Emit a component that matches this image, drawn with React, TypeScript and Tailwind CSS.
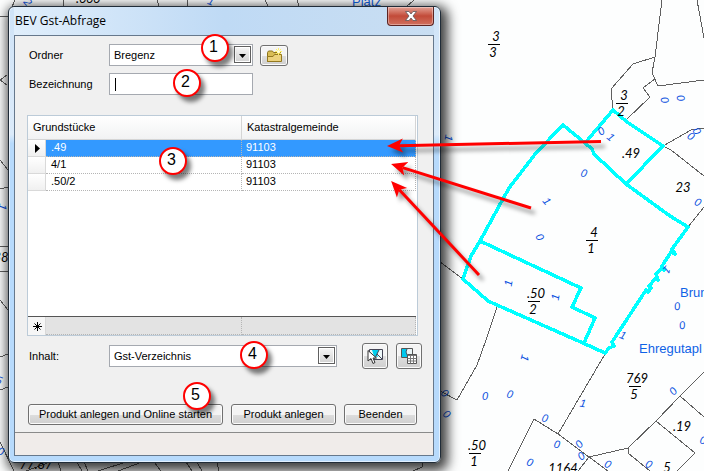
import React from 'react';

type Mark = [string, number, number, number];

const parcels = [
  { id: '.49', kg: '91103' },
  { id: '4/1', kg: '91103' },
  { id: '.50/2', kg: '91103' },
];

const boundaries = [
  'M662 0 655 57 652 73 658 86 704 80',
  'M655 57 633 64 611 89 613 110',
  'M655 79 643 88 650 97 626 120',
  'M697 0 704 38',
  'M663 146 691 130 704 128',
  'M663 146 671 150 704 176',
  'M688 227 704 207',
  'M440 262 463 279',
  'M497 307 486 340 477 365 457 400 440 391',
  'M605 354 558 434',
  'M508 471 534 419 558 434 589 457 608 471',
  'M578 471 589 457 628 448 656 421 680 396 704 372',
  'M628 448 628 453 650 471',
  'M656 421 695 453 677 471',
  'M680 396 704 417',
  'M15 0 8 16 0 16',
  'M63 0V6M157 0 159 6M187 0 188 6M265 0 268 6M297 0 299 6M414 0 406 7',
  'M7 75 0 80 7 85M0 160 8 170M0 189 8 187M0 247 8 246M0 271H8M0 300 8 310M0 357 8 354M0 390 8 387',
  'M0 442 14 471M26 471 50 462M58 462 61 471M77 462 82 471M84 462 88 471M98 471 126 462M118 471 142 462M154 462 161 471M186 462 192 471M197 462 202 471M217 462 219 471M422 463V467L413 471',
];

const marks: Mark[] = [
  ['1', 449, 138, 100], ['0', 601, 131, -35], ['1', 611, 137, 40], ['0', 665, 100, 75],
  ['0', 681, 98, 75], ['0', 691, 136, 35], ['0', 697, 131, 60], ['0', 584, 173, 15],
  ['1', 547, 201, 50], ['0', 698, 202, 25], ['0', 540, 237, 60], ['1', 508, 283, -80],
  ['1', 555, 297, -80], ['1', 667, 270, 130], ['0', 677, 306, -10], ['0', 682, 325, -10],
  ['1', 623, 335, 20], ['0', 445, 393, 40], ['0', 447, 414, 40], ['0', 485, 396, 0],
  ['0', 510, 394, 15], ['1', 525, 358, 105], ['1', 583, 403, 10], ['0', 545, 418, 15],
  ['0', 557, 444, 10], ['0', 579, 444, -50], ['0', 581, 456, -40], ['0', 530, 462, 20],
  ['0', 608, 464, 25], ['0', 649, 464, 25], ['0', 673, 391, -50], ['0', 703, 440, 10],
  ['2', 28, 2, 50], ['1', 211, 1, 20], ['1', 3, 207, 100], ['5', -1, 380, 20], ['0', 1, 451, 20],
];

const fractions: [string, string, number, number][] = [
  ['3', '3', 494, 44],
  ['3', '2', 622, 103],
  ['4', '1', 592, 240],
  ['.50', '2', 534, 301],
  ['769', '5', 635, 386],
  ['.50', '1', 475, 453],
];

const numbers: [string, number, number][] = [
  ['.49', 631, 158],
  ['23', 683, 192],
  ['.19', 682, 431],
  ['1164', 563, 473],
  ['5', 667, 472],
  ['.666', 88, 3],
  ['38', 1, 262],
  ['77.87', 36, 469],
];

const callouts = [
  { n: 1, pos: 'left-[201px] top-[34px]' },
  { n: 2, pos: 'left-[173px] top-[69px]' },
  { n: 3, pos: 'left-[159px] top-[147px]' },
  { n: 4, pos: 'left-[240px] top-[341px]' },
  { n: 5, pos: 'left-[183px] top-[382px]' },
];

const buttonStyle =
  'flex items-center justify-center rounded-[3px] border border-[#707070] bg-linear-to-b from-[#f4f4f4] from-50% via-[#dedede] via-50% to-[#cfcfcf] shadow-[inset_0_0_0_1px_#fbfbfb]';

function CadastralMap() {
  return (
    <svg className="absolute inset-0 h-full w-full" aria-hidden="true">
      <g fill="none" stroke="#606060" shapeRendering="crispEdges">
        {boundaries.map((d) => (
          <path key={d} d={d} />
        ))}
      </g>
      <g fill="none" stroke="#00ffff" strokeWidth="3.5" strokeLinejoin="round" shapeRendering="crispEdges">
        <path d="M563 125 536 153 509 188 480 241 471 256 463 279 488 301 583 343 605 353 609 348 614 346 612 342 614 339 646 290 648 292 651 288 649 286 656 278 658 280 656 274 661 269 664 270 662 266 671 252 675 254 672 249 688 227 670 216 626 184 594 154 592 149 585 143Z" />
        <path d="M585 143 613 110 627 122 663 146 626 184" />
        <path d="M480 241 581 288 572 307 595 318 584 343" />
      </g>
      <g className="font-['Liberation_Sans',sans-serif] text-[11px]" fill="#0a50e0" textAnchor="middle">
        {marks.map(([char, x, y, angle]) => (
          <text key={`${x}-${y}`} transform={`translate(${x} ${y}) rotate(${angle})`} y={4} fontStyle="italic">
            {char}
          </text>
        ))}
      </g>
      <g className="font-['Lato',sans-serif] text-[13px] italic" fill="#000" textAnchor="middle">
        {fractions.map(([top, bottom, x, y]) => (
          <g key={`${x}-${y}`}>
            <text x={x + 2} y={y - 3}>{top}</text>
            <path d={`M${x - 6} ${y + 0.5}h12`} stroke="#000" />
            <text x={x - 1} y={y + 13}>{bottom}</text>
          </g>
        ))}
        {numbers.map(([label, x, y]) => (
          <text key={label} x={x} y={y}>{label}</text>
        ))}
      </g>
      <g className="font-['Liberation_Sans',sans-serif] text-[13px]" fill="#0f62e6">
        <text x="680" y="297">Brun</text>
        <text x="639" y="353">Ehregutapl</text>
        <text x="352" y="6">Platz</text>
      </g>
    </svg>
  );
}

function Arrows() {
  return (
    <svg className="pointer-events-none absolute inset-0 h-full w-full" aria-hidden="true">
      <defs>
        <marker id="head" markerUnits="userSpaceOnUse" markerWidth="18" markerHeight="16" refX="4" refY="8" orient="auto">
          <path d="M0 1 16 8 0 15 4 8Z" fill="#ff0000" />
        </marker>
      </defs>
      <g className="drop-shadow-[4px_5px_2px_rgba(0,0,0,0.4)]" stroke="#ff0000" strokeWidth="3">
        <path d="M601 141.5 399 145.7" markerEnd="url(#head)" />
        <path d="M531 208 402.5 167.6" markerEnd="url(#head)" />
        <path d="M479 275 399.3 189.8" markerEnd="url(#head)" />
      </g>
    </svg>
  );
}

function DropDown({ id, value, width }: { id: string; value: string; width: string }) {
  return (
    <span className={`relative block h-[22px] ${width}`}>
      <select id={id} defaultValue={value} className="h-full w-full appearance-none border border-[#a5a9b0] bg-white pl-1 text-black outline-none">
        <option>{value}</option>
      </select>
      <span className="pointer-events-none absolute right-[2px] top-[2px] flex size-[17px] items-center justify-center border border-[#606060] bg-linear-to-b from-[#f6f6f6] to-[#d2d2d2] shadow-[inset_0_0_0_1px_#fff]">
        <svg viewBox="0 0 7 4" className="mt-[2px] h-1 w-[7px]">
          <path d="M0 0h7L3.5 4Z" />
        </svg>
      </span>
    </span>
  );
}

function FolderIcon() {
  return (
    <svg viewBox="0 0 17 15" className="h-[15px] w-[17px]">
      <path d="M1.5 13.5V4.5L2.5 3H6.5L7.5 4.5H14.5V13.5Z" fill="#d9bd55" stroke="#8d741c" />
      <path d="M1.5 13.5V8.500H7L8.500 6.500H15.500V13.500Z" fill="#ecd27c" stroke="#94791f" />
      <path d="M12.500 0V7M9 3.500H16M10 1 15 6M15 1 10 6" stroke="#fff36b" />
      <circle cx="12.5" cy="3.5" r="1.5" fill="#fffde0" />
    </svg>
  );
}

function PickOnMapIcon() {
  return (
    <svg viewBox="0 0 16 16" className="size-4">
      <path d="M2.5 1.5H15.5V11.5H2.5Z" fill="#eef8fa" stroke="#445" />
      <path d="M5 2H12L10 6 11 9 7 8Z" fill="#00cfee" />
      <path d="M12 2 10 6 15 11M10 6 7 12" fill="none" stroke="#445" />
      <path d="M1 2.5V13L4 10.5 6 15.5 8 14.5 6 10H9.5Z" fill="#fff" stroke="#333" />
    </svg>
  );
}

function MapTableIcon() {
  return (
    <svg viewBox="0 0 16 16" className="size-4">
      <path d="M.5.5H11.5V9.5H.5Z" fill="#e9f4f6" stroke="#555" />
      <path d="M1 1H6L5 4 7 9H1Z" fill="#00c8ee" />
      <path d="M6 1 5 4 7 9" fill="none" stroke="#456" />
      <path d="M6.5 6.5H15.5V15.5H6.5Z" fill="#fff" stroke="#555" />
      <path d="M7 7.5H15" stroke="#777" />
      <path d="M6.5 10.5H15.5M6.5 13H15.5M9.5 8V15.5M12.5 8V15.5" stroke="#777" />
    </svg>
  );
}

function ParcelTable() {
  return (
    <div className="ml-3 mt-5 w-[391px] border border-[#bccbd8] bg-white pr-px">
      <table className="w-full table-fixed border-separate border-spacing-0 text-left">
        <colgroup>
          <col className="w-[18px]" />
          <col className="w-[196px]" />
          <col />
        </colgroup>
        <thead>
          <tr className="h-6 bg-linear-to-b from-white to-[#f1f2f3]">
            <th colSpan={2} className="border-b border-r border-[#d5d5d5] py-0 pl-[5px] font-normal">Grundstücke</th>
            <th className="border-b border-r border-[#d5d5d5] py-0 pl-[5px] font-normal">Katastralgemeinde</th>
          </tr>
        </thead>
        <tbody>
          {parcels.map((p, i) => (
            <tr key={p.id} className={i === 0 ? 'h-[17px] bg-[#3399ff] text-white' : 'h-[17px]'}>
              <td className="border-b border-r border-[#d9d9d9] bg-linear-to-b from-white to-[#f0f0f0] p-0">
                {i === 0 && (
                  <svg viewBox="0 0 5 9" className="ml-[7px] h-[9px] w-[5px]">
                    <path d="M0 0 5 4.5 0 9Z" fill="#000" />
                  </svg>
                )}
              </td>
              <td className="border-b border-r border-dotted border-[#b5b5b5] pb-[2px] pl-[5px] pt-0 leading-[14px]">{p.id}</td>
              <td className="border-b border-r border-dotted border-[#b5b5b5] pb-[2px] pl-1 pt-0 leading-[14px]">{p.kg}</td>
            </tr>
          ))}
          <tr className="h-[126px]">
            <td colSpan={3} className="border-b border-[#555] p-0" />
          </tr>
        </tbody>
        <tfoot>
          <tr className="h-[18px] bg-[#e3e3e3]">
            <td className="border-r border-[#d9d9d9] bg-[#f6f6f6] p-0">
              <svg viewBox="0 0 9 9" className="ml-[5px] size-[9px]">
                <path d="M4.5 0V9M0 4.5H9M1.5 1.5 7.5 7.5M7.5 1.5 1.5 7.5" stroke="#000" />
              </svg>
            </td>
            <td className="border-b border-r border-dotted border-[#b5b5b5] p-0" />
            <td className="border-b border-r border-dotted border-[#b5b5b5] p-0" />
          </tr>
        </tfoot>
      </table>
    </div>
  );
}

function QueryDialog() {
  return (
    <section
      aria-label="BEV Gst-Abfrage"
      className="relative ml-2 mt-[6px] w-[433px] rounded-md border border-[#202c38] bg-linear-to-b from-[#cfe3f7] from-0% via-[#dcebfa] via-28% to-[#b7dafc] to-30% pb-[6px] pl-[5px] pr-[6px] shadow-[3px_4px_12px_4px_rgba(0,0,0,0.75),inset_0_0_0_1px_rgba(255,255,255,0.6)]"
    >
      <header className="flex h-7 items-start justify-between bg-linear-to-r from-[#e0eefb] via-[#bfdaf5] via-50% to-[#c9def2]">
        <h1 className="pl-px pt-[6px] font-['Open_Sans',sans-serif] text-[12px] leading-4 text-black">BEV Gst-Abfrage</h1>
        <button
          type="button"
          aria-label="Schließen"
          className="flex h-[19px] w-[47px] items-center justify-center rounded-b-[4px] border border-t-0 border-[#5c2422] bg-linear-to-b from-[#e3a195] from-0% via-[#c24a38] via-50% to-[#d0705e] shadow-[inset_0_0_0_1px_rgba(255,255,255,0.35)]"
        >
          <svg viewBox="0 0 12 10" className="h-[10px] w-3">
            <path d="M.5.5H4L6 3 8 .5H11.5L8 5 11.5 9.5H8L6 7 4 9.5H.5L4 5Z" fill="#fff" stroke="#5d5558" strokeWidth=".8" />
          </svg>
        </button>
      </header>

      <div className="border border-[#66788c] bg-[#f0f0f0]">
        <form className="pb-[7px] pt-2" onSubmit={(e) => e.preventDefault()}>
          <div className="flex items-center pl-[14px]">
            <label htmlFor="ordner" className="w-20">Ordner</label>
            <DropDown id="ordner" value="Bregenz" width="w-36" />
            <button type="button" aria-label="Neuer Ordner" className={`ml-[7px] h-[21px] w-7 ${buttonStyle}`}>
              <FolderIcon />
            </button>
          </div>
          <div className="mt-[7px] flex items-center pl-[14px]">
            <label htmlFor="bezeichnung" className="w-20">Bezeichnung</label>
            <span className="flex h-[22px] w-36 items-center border border-[#a5a9b0] bg-white pl-[5px]">
              <span className="h-[13px] w-px bg-black" />
              <input id="bezeichnung" className="h-full w-full min-w-0 bg-transparent outline-none" />
            </span>
          </div>

          <ParcelTable />

          <div className="mt-[7px] flex items-center pl-[14px]">
            <label htmlFor="inhalt" className="w-20">Inhalt:</label>
            <DropDown id="inhalt" value="Gst-Verzeichnis" width="w-[228px]" />
            <button type="button" aria-label="In Karte wählen" className={`ml-[25px] size-[26px] ${buttonStyle}`}>
              <PickOnMapIcon />
            </button>
            <button type="button" aria-label="Aus Tabelle übernehmen" className={`ml-2 size-[26px] ${buttonStyle}`}>
              <MapTableIcon />
            </button>
          </div>

          <div className="mt-[35px] flex gap-2 pl-[13px]">
            <button type="button" className={`h-[21px] w-[195px] ${buttonStyle}`}>Produkt anlegen und Online starten</button>
            <button type="button" className={`h-[21px] w-[105px] ${buttonStyle}`}>Produkt anlegen</button>
            <button type="button" className={`h-[21px] w-[73px] ${buttonStyle}`}>Beenden</button>
          </div>
        </form>
        <footer className="h-[23px] border-t border-[#8a8a8a] bg-[#f0ecea]" />
      </div>
    </section>
  );
}

export default function App() {
  return (
    <main className="relative flow-root min-h-screen overflow-hidden bg-[#fdfefe] font-['Liberation_Sans',sans-serif] text-[11px] text-black">
      <CadastralMap />
      <QueryDialog />
      <Arrows />
      {callouts.map(({ n, pos }) => (
        <span
          key={n}
          className={`absolute flex size-7 items-center justify-center rounded-full border-2 border-[#ff0000] bg-white pb-[2px] pr-[3px] text-[16px] leading-4 shadow-[4px_5px_4px_rgba(0,0,0,0.5)] ${pos}`}
        >
          {n}
        </span>
      ))}
    </main>
  );
}
